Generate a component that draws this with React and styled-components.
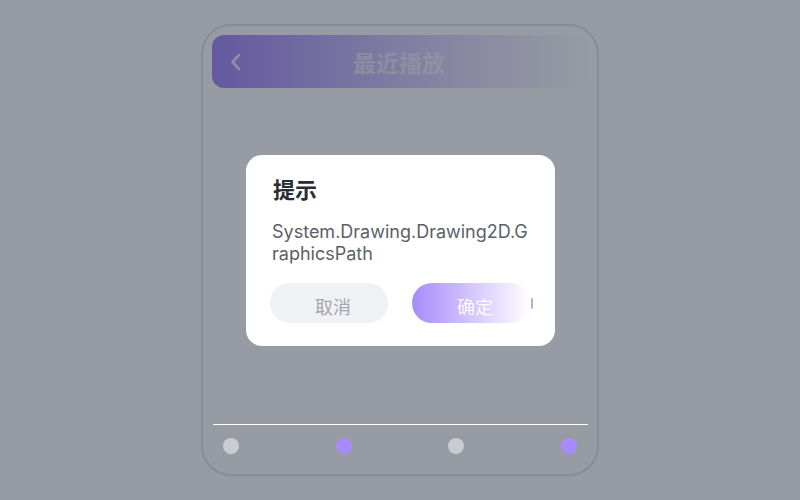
import React from "react";
import styled, { createGlobalStyle } from "styled-components";

const GlobalStyle = createGlobalStyle`
  html, body {
    margin: 0;
    padding: 0;
    background: #ffffff;
    font-family: Inter, "Noto Sans CJK SC", sans-serif;
  }
`;

const Page = styled.div`
  width: 800px;
  height: 500px;
  display: flex;
  justify-content: center;
  padding-top: 24px;
  box-sizing: border-box;
`;

const Phone = styled.div`
  width: 398px;
  height: 452px;
  box-sizing: border-box;
  border: 2px solid #e3e5ea;
  border-radius: 30px;
  background: #ffffff;
  padding: 9px 9px 0;
  display: flex;
  flex-direction: column;
`;

const Header = styled.div`
  height: 53px;
  border-radius: 12px;
  background: linear-gradient(90deg, #a78bfa 0%, rgba(167, 139, 250, 0.35) 60%, rgba(167, 139, 250, 0) 100%);
  display: flex;
  align-items: center;
  justify-content: center;
  position: relative;
  flex-shrink: 0;
`;

const BackButton = styled.button`
  position: absolute;
  left: 12px;
  top: 50%;
  transform: translateY(-50%);
  width: 24px;
  height: 24px;
  padding: 0;
  border: none;
  background: none;
  display: flex;
  align-items: center;
  justify-content: center;
`;

const HeaderTitle = styled.h1`
  margin: 0 0 0 -2px;
  font-family: "Noto Sans CJK SC", sans-serif;
  font-size: 23px;
  font-weight: 700;
  color: rgba(255, 255, 255, 0.6);
`;

const Content = styled.div`
  flex: 1;
`;

const BottomNav = styled.div`
  position: relative;
  z-index: 20;
  border-top: 1px solid #ffffff;
  margin: 0 0 0 1px;
  padding: 13px 11px 20px 10px;
  display: flex;
  justify-content: space-between;
`;

const Dot = styled.span`
  width: 16px;
  height: 16px;
  border-radius: 50%;
  background: ${(p) => (p.active ? "#a78bfa" : "#c9ccd2")};
`;

const Backdrop = styled.div`
  position: fixed;
  inset: 0;
  z-index: 10;
  background: rgba(15, 23, 42, 0.43);
  display: flex;
  align-items: flex-start;
  justify-content: center;
`;

const Dialog = styled.div`
  margin-top: 155px;
  margin-left: 1px;
  width: 309px;
  height: 191px;
  box-sizing: border-box;
  background: #ffffff;
  border-radius: 16px;
  padding: 19px 23px 0 24px;
  display: flex;
  flex-direction: column;
`;

const DialogTitle = styled.h2`
  margin: 0 0 0 3px;
  font-family: "Noto Sans CJK SC", sans-serif;
  font-size: 22px;
  line-height: 28px;
  font-weight: 700;
  color: #2c2d33;
`;

const DialogText = styled.p`
  margin: 19px 3px 0 2px;
  font-size: 18px;
  line-height: 22px;
  font-weight: 400;
  color: #5c5f67;
  word-break: break-all;
`;

const Actions = styled.div`
  margin-top: 18px;
  display: flex;
  gap: 24px;
`;

const ActionButton = styled.button`
  position: relative;
  width: 118px;
  height: 40px;
  border: none;
  border-radius: 20px;
  padding: 5px 0 0 8px;
  font-family: "Noto Sans CJK SC", sans-serif;
  font-size: 18px;
  color: ${(p) => (p.primary ? "rgba(255, 255, 255, 0.95)" : "#a5a7ae")};
  background: ${(p) =>
    p.primary ? "linear-gradient(90deg, #a78bfa 0%, #ffffff 100%)" : "#f0f1f4"};

  ${(p) =>
    p.primary &&
    `
    &::after {
      content: "";
      position: absolute;
      right: -3px;
      top: 15px;
      width: 2px;
      height: 11px;
      border-radius: 1px;
      background: #b9a6fb;
    }
  `}
`;

export default function App() {
  return (
    <>
      <GlobalStyle />
      <Page>
        <Phone>
          <Header>
            <BackButton>
              <svg width="14" height="20" viewBox="0 0 14 20" fill="none">
                <path
                  d="M10 3 L3.5 10 L10 17"
                  stroke="rgba(255,255,255,0.8)"
                  strokeWidth="2.6"
                  strokeLinecap="round"
                  strokeLinejoin="round"
                />
              </svg>
            </BackButton>
            <HeaderTitle>最近播放</HeaderTitle>
          </Header>
          <Content />
          <BottomNav>
            <Dot />
            <Dot active />
            <Dot />
            <Dot active />
          </BottomNav>
        </Phone>
      </Page>
      <Backdrop>
        <Dialog>
          <DialogTitle>提示</DialogTitle>
          <DialogText>System.Drawing.Drawing2D.GraphicsPath</DialogText>
          <Actions>
            <ActionButton>取消</ActionButton>
            <ActionButton primary>确定</ActionButton>
          </Actions>
        </Dialog>
      </Backdrop>
    </>
  );
}
